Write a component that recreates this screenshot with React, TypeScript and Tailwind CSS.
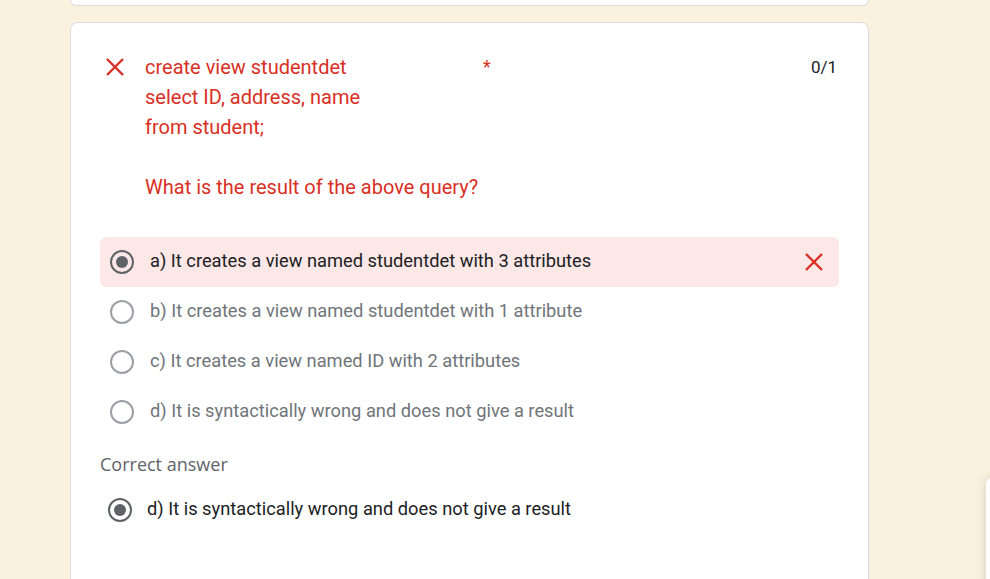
import React from 'react';

const options = [
  { label: 'a) It creates a view named studentdet with 3 attributes', selected: true },
  { label: 'b) It creates a view named studentdet with 1 attribute', selected: false },
  { label: 'c) It creates a view named ID with 2 attributes', selected: false },
  { label: 'd) It is syntactically wrong and does not give a result', selected: false },
];

function CrossIcon({ className }: { className?: string }) {
  return (
    <svg viewBox="0 0 20 20" className={className} fill="none">
      <path d="M2 2L18 18M18 2L2 18" stroke="#d93025" strokeWidth="2.4" />
    </svg>
  );
}

function Radio({ checked }: { checked: boolean }) {
  return (
    <span
      className={`flex h-[24px] w-[24px] shrink-0 items-center justify-center rounded-full border-2 ${
        checked ? 'border-[#5f6368]' : 'border-[#9aa0a6]'
      }`}
    >
      {checked && <span className="h-[12px] w-[12px] rounded-full bg-[#5f6368]" />}
    </span>
  );
}

export default function App() {
  return (
    <div className="relative min-h-screen overflow-hidden bg-[#faf2de] pl-[70px] font-['Roboto',sans-serif]">
      {/* Previous card tail */}
      <div className="h-[6px] w-[799px] rounded-b-lg border border-t-0 border-[#dadce0] bg-white" />

      {/* Question card */}
      <div className="mt-4 w-[799px] rounded-lg border border-[#dadce0] bg-white pb-16 pl-[29px] pr-[29px] pt-[29px]">
        <div className="flex items-start">
          <CrossIcon className="ml-[5px] mt-[5px] h-[20px] w-[20px] shrink-0" />
          <div className="ml-[20px] w-[338px] text-[20px] leading-[30px] text-[#d93025]">
            <div>create view studentdet</div>
            <div>select ID, address, name</div>
            <div>from student;</div>
            <div>&nbsp;</div>
            <div>What is the result of the above query?</div>
          </div>
          <span className="text-[18px] leading-[30px] text-[#d93025]">*</span>
          <span className="ml-auto mr-[2px] text-[17px] leading-[30px] text-[#202124]">0/1</span>
        </div>

        <div className="mt-[35px] flex flex-col">
          {options.map((o) => (
            <div
              key={o.label}
              className={`flex h-[50px] items-center rounded-md pl-[10px] pr-[15px] ${
                o.selected ? 'bg-[#fce8e6]' : ''
              }`}
            >
              <Radio checked={o.selected} />
              <span
                className={`ml-[16px] pb-[2px] text-[18.3px] ${o.selected ? 'text-[#202124]' : 'text-[#70757a]'}`}
              >
                {o.label}
              </span>
              {o.selected && <CrossIcon className="ml-auto h-[20px] w-[20px]" />}
            </div>
          ))}
        </div>

        <div className="mt-[15px] font-['Open_Sans',sans-serif] text-[18px] font-medium leading-[24px] text-[#5f6368]">
          Correct answer
        </div>
        <div className="mt-[9px] flex h-[50px] items-center pl-[8px]">
          <Radio checked />
          <span className="ml-[15px] pb-[2px] text-[18.3px] text-[#202124]">
            d) It is syntactically wrong and does not give a result
          </span>
        </div>
      </div>

      {/* Floating panel cut off at right edge */}
      <div className="absolute left-[986px] top-[478px] h-[200px] w-[60px] rounded-md bg-white shadow-[0_0_12px_rgba(0,0,0,0.15)]" />
    </div>
  );
}
